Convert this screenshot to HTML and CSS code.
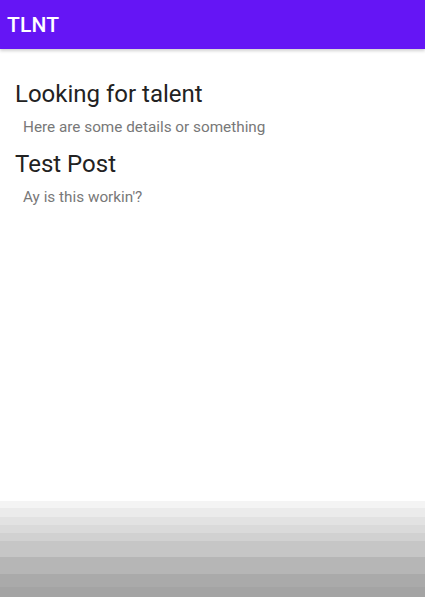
FILE: index.html
```html
<!DOCTYPE html>
<html>
<head>
<meta charset="utf-8">
<link rel="stylesheet" href="styles.css">
</head>
<body>
<div class="app">
  <header class="appbar"><span class="title">TLNT</span></header>
  <main class="list">
    <div class="post">
      <div class="post-title">Looking for talent</div>
      <div class="post-body">Here are some details or something</div>
    </div>
    <div class="post">
      <div class="post-title">Test Post</div>
      <div class="post-body">Ay is this workin'?</div>
    </div>
  </main>
  <div class="fade">
    <div class="band b1"></div>
    <div class="band b2"></div>
    <div class="band b3"></div>
    <div class="band b4"></div>
    <div class="band b5"></div>
    <div class="band b6"></div>
    <div class="band b7"></div>
    <div class="band b8"></div>
    <div class="band b9"></div>
  </div>
</div>
</body>
</html>
```
FILE: styles.css
```css
* { box-sizing: border-box; }
html, body { margin: 0; padding: 0; }
body { background: #fff; font-family: Roboto, "Noto Sans", sans-serif; }
.app { width: 425px; height: 597px; display: flex; flex-direction: column; overflow: hidden; }
.appbar {
  height: 49px;
  background: #6515f5;
  display: flex;
  align-items: center;
  padding-left: 7px;
  box-shadow: 0 2px 3px rgba(0,0,0,0.18);
  position: relative;
  z-index: 1;
  flex: none;
}
.title { color: #fff; font-size: 21px; font-weight: 500; letter-spacing: 0.2px; }
.list { flex: 1; padding: 30px 0 0 15px; display: flex; flex-direction: column; }
.post { height: 70px; }
.post-title { font-size: 24px; line-height: 30px; color: #222; }
.post-body { font-size: 15.3px; line-height: 18px; color: #787878; padding-left: 8px; margin-top: 9px; }
.fade { flex: none; height: 96px; display: flex; flex-direction: column; }
.band { flex: none; }
.b1 { height: 7px; background: #f4f4f4; }
.b2 { height: 9px; background: #ebebeb; }
.b3 { height: 8px; background: #e2e2e2; }
.b4 { height: 8px; background: #dadada; }
.b5 { height: 8px; background: #d1d1d1; }
.b6 { height: 16px; background: #c6c6c6; }
.b7 { height: 17px; background: #b6b6b6; }
.b8 { height: 13px; background: #aaaaaa; }
.b9 { height: 10px; background: #a4a4a4; }
```
